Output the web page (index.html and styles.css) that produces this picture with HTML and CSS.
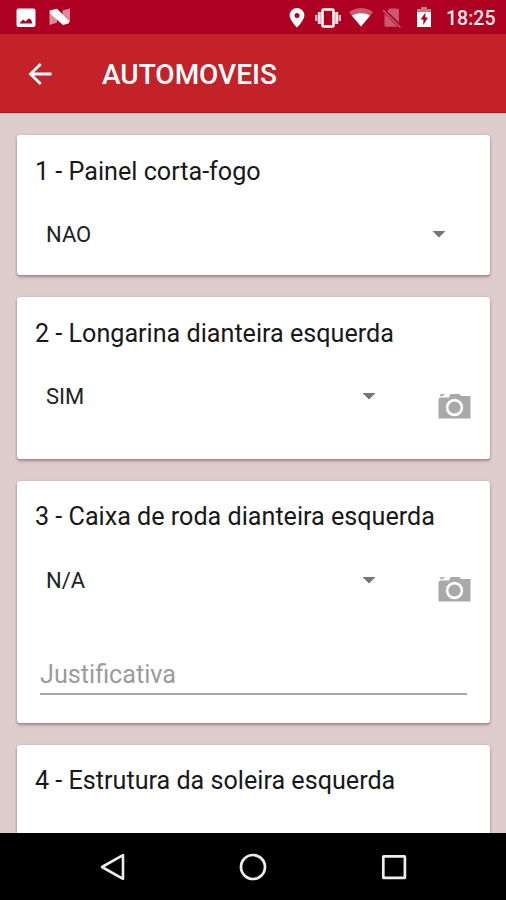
FILE: index.html
```html
<!DOCTYPE html>
<html lang="pt-BR">
<head>
<meta charset="utf-8">
<title>AUTOMOVEIS</title>
<link rel="stylesheet" href="styles.css">
</head>
<body>
<div class="screen">
  <div class="status">
    <svg class="st-photo" width="20" height="20" viewBox="0 0 20 20"><path fill="#fff" fill-rule="evenodd" d="M2.500.5H17.500Q19.500.5 19.500 2.500V17Q19.500 19 17.500 19H2.500Q.5 19 .5 17V2.500Q.5.5 2.500.5ZM3.500 15.500H16.500L15 11.500L12.500 10.500L9.500 13.500L7 11.500Z"/></svg>
    <svg class="st-n" width="22" height="18" viewBox="0 0 22 18"><path fill="#fff" opacity=".55" d="M.5 3.500L8 7V14.500L.5 17ZM13.500 2.500L21 .5V14L13.500 10Z"/><path fill="#fff" d="M.5 2.500L8 .8L20.500 13.500L19.500 15.500L14 17L1 5.500Z"/></svg>
    <span class="grow"></span>
    <svg class="st-pin" width="16" height="20" viewBox="0 0 16 20"><path fill="#fff" fill-rule="evenodd" d="M8 0A7.400 7.400 0 0 0 .6 7.400C.6 12 8 19.500 8 19.500S15.400 12 15.400 7.400A7.400 7.400 0 0 0 8 0ZM8 4.900A2.500 2.500 0 1 1 8 9.900A2.500 2.500 0 0 1 8 4.900Z"/></svg>
    <svg class="st-vib" width="28" height="20" viewBox="0 0 28 20"><rect x="8.500" y="1.500" width="11" height="17" rx="1" fill="none" stroke="#fff" stroke-width="2.600"/><path stroke="#fff" stroke-width="3" opacity=".9" d="M5.300 4V16M22.700 4V16"/><path stroke="#fff" stroke-width="2.400" opacity=".7" d="M2.200 7V13M25.800 7V13"/></svg>
    <svg class="st-wifi" width="26" height="19" viewBox="0 0 26 19"><path fill="#fff" opacity=".35" d="M1 4.200Q13-4 25 4.200L13 18.500Z"/><path fill="#fff" d="M3.800 7.600Q13 3 22.200 7.600L13 18.500Z"/></svg>
    <svg class="st-sim" width="20" height="20" viewBox="0 0 20 20"><g opacity=".35"><path fill="#fff" d="M7.500.5H15.500Q17 .5 17 2V14.500L5.200 3.300ZM2.500 5.500L15.800 18.800H4Q2.500 18.800 2.500 17.300Z"/><path stroke="#fff" stroke-width="1.500" d="M1 2L18.500 19.500"/></g></svg>
    <svg class="st-bat" width="16" height="21" viewBox="0 0 16 21"><path fill="#fff" opacity=".45" d="M5 0H11V2H15V6H1V2H5Z"/><path fill="#fff" fill-rule="evenodd" d="M1 5H15V20H1ZM9.500 5.500L4.500 12.500H7.300V18L12 10.500H9.300Z"/></svg>
    <span class="clock">18:25</span>
  </div>
  <header class="bar">
    <svg class="back" width="24" height="24" viewBox="0 0 24 24"><path fill="none" stroke="#fff" stroke-width="2.800" d="M23.500 12H3M12.700 2L2.500 12L12.700 22"/></svg>
    <h1>AUTOMOVEIS</h1>
  </header>
  <main class="list">
    <section class="card c1">
      <h2>1 - Painel corta-fogo</h2>
      <div class="row"><span class="value">NAO</span><i class="caret wide"></i></div>
    </section>
    <section class="card c2">
      <h2>2 - Longarina dianteira esquerda</h2>
      <div class="row"><span class="value">SIM</span><i class="caret"></i>
        <svg class="camera" width="33" height="26" viewBox="0 0 33 26"><path fill="#a9a9a9" d="M.5 5.500L3 4.500H11L12.500 1H21.500L23 3H32.500V25.500H.5ZM1.500 2L5 .8L7 1.800L3 3.500Z"/><circle cx="16.500" cy="14.500" r="7.400" fill="none" stroke="#fff" stroke-width="2.600"/></svg></div>
    </section>
    <section class="card c3">
      <h2>3 - Caixa de roda dianteira esquerda</h2>
      <div class="row"><span class="value">N/A</span><i class="caret"></i>
        <svg class="camera" width="33" height="26" viewBox="0 0 33 26"><path fill="#a9a9a9" d="M.5 5.500L3 4.500H11L12.500 1H21.500L23 3H32.500V25.500H.5ZM1.500 2L5 .8L7 1.800L3 3.500Z"/><circle cx="16.500" cy="14.500" r="7.400" fill="none" stroke="#fff" stroke-width="2.600"/></svg></div>
      <div class="field"><span>Justificativa</span></div>
    </section>
    <section class="card c4">
      <h2>4 - Estrutura da soleira esquerda</h2>
    </section>
  </main>
  <nav class="nav">
    <svg width="28" height="28" viewBox="0 0 28 28"><path fill="none" stroke="#eee" stroke-width="2.600" stroke-linejoin="round" d="M24 2.200V25.800L3 14Z"/></svg>
    <svg width="28" height="28" viewBox="0 0 28 28"><circle cx="14" cy="14" r="12" fill="none" stroke="#eee" stroke-width="2.700"/></svg>
    <svg width="28" height="28" viewBox="0 0 28 28"><rect x="3.300" y="3.300" width="21.600" height="21.600" rx=".5" fill="none" stroke="#eee" stroke-width="2.700"/></svg>
  </nav>
</div>
</body>
</html>
```
FILE: styles.css
```css
* { box-sizing: border-box; }
body { margin: 0; font-family: Roboto, "Liberation Sans", sans-serif; }
svg { display: block; flex: none; }
.screen { width: 506px; height: 900px; display: flex; flex-direction: column; overflow: hidden; background: #dfcccd; }
.status { height: 34px; flex: none; background: #ae0021; display: flex; padding: 0 11px 0 16px; }
.st-photo { margin-top: 8px; }
.st-n { margin: 8px 0 0 13px; }
.grow { flex: 1; }
.st-pin { margin: 8px 9px 0 0; }
.st-vib { margin: 8px 6px 0 0; }
.st-wifi { margin: 8px 8px 0 0; }
.st-sim { margin: 8px 14px 0 0; }
.st-bat { margin: 7px 14px 0 0; }
.clock { width: 49px; color: #f7e9ec; font-size: 19.5px; font-weight: 500; line-height: 37px; white-space: nowrap; }
.bar { height: 79px; flex: none; background: #c32229; border-bottom: 1px solid #b31218; display: flex; align-items: center; padding-left: 28px; }
.back { margin: 1px 50px 0 0; }
h1 { margin: 3px 0 0; color: #fff; font-size: 28px; line-height: 32px; font-weight: 500; }
.list { flex: 1; min-height: 0; overflow: hidden; padding: 22px 16px 0 17px; display: flex; flex-direction: column; gap: 22px; }
.card { flex: none; background: #fff; border-radius: 3px; padding: 21px 19px 0 18px; box-shadow: 0 2px 3px rgba(70, 30, 35, .38), 0 0 2px rgba(70, 30, 35, .18); }
.c1 { height: 140px; }
.c2 { height: 162px; }
.c3 { height: 242px; padding-top: 20px; }
.c4 { height: 140px; padding-top: 20px; }
h2 { margin: 0; color: #181818; font-size: 25.15px; line-height: 32px; font-weight: 400; white-space: nowrap; }
.row { height: 40px; margin-top: 27px; padding-left: 11px; display: flex; align-items: center; }
.c3 .row { margin-top: 28px; }
.value { width: 316px; color: #222; font-size: 22px; line-height: 40px; }
.caret { width: 14px; height: 7px; background: #757575; clip-path: polygon(0 0, 100% 0, 50% 100%); margin-top: -2px; }
.caret.wide { margin-left: 70px; }
.camera { margin: 18px 0 0 62px; }
.c3 .camera { margin-top: 16px; }
.field { margin: 50px 4px 0 5px; height: 44px; border-bottom: 2px solid #a8a8a8; color: #9b9b9b; font-size: 25.2px; line-height: 48px; }
.nav { height: 67px; flex: none; background: #000; display: flex; justify-content: center; align-items: center; gap: 112.500px; }
```
